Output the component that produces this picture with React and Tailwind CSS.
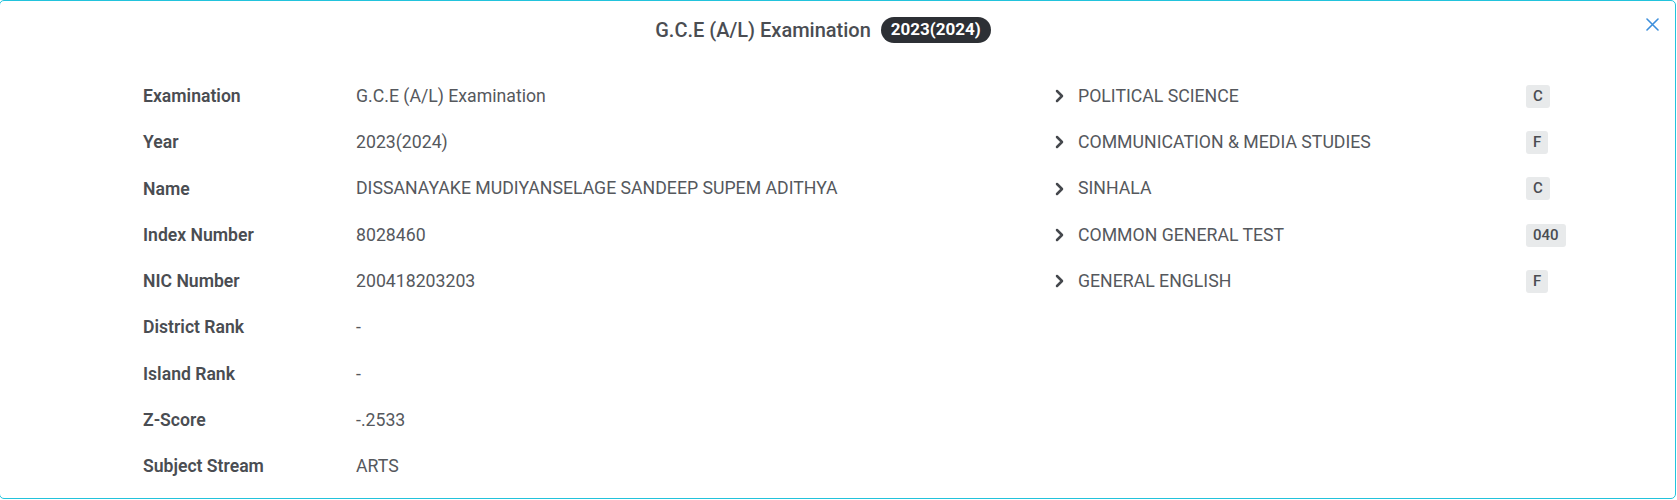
const DETAILS = [
  { label: 'Examination', value: 'G.C.E (A/L) Examination' },
  { label: 'Year', value: '2023(2024)' },
  { label: 'Name', value: 'DISSANAYAKE MUDIYANSELAGE SANDEEP SUPEM ADITHYA' },
  { label: 'Index Number', value: '8028460' },
  { label: 'NIC Number', value: '200418203203' },
  { label: 'District Rank', value: '-' },
  { label: 'Island Rank', value: '-' },
  { label: 'Z-Score', value: '-.2533' },
  { label: 'Subject Stream', value: 'ARTS' },
];

const SUBJECTS = [
  { name: 'POLITICAL SCIENCE', grade: 'C' },
  { name: 'COMMUNICATION & MEDIA STUDIES', grade: 'F' },
  { name: 'SINHALA', grade: 'C' },
  { name: 'COMMON GENERAL TEST', grade: '040' },
  { name: 'GENERAL ENGLISH', grade: 'F' },
];

function Chevron() {
  return (
    <svg width="10" height="14" viewBox="0 0 10 14" className="shrink-0">
      <polyline points="2,2 7,7 2,12" fill="none" stroke="#45484d" strokeWidth="2.5" strokeLinecap="round" strokeLinejoin="round" />
    </svg>
  );
}

function CloseIcon() {
  return (
    <svg width="13" height="13" viewBox="0 0 13 13">
      <path d="M1 1 12 12M12 1 1 12" stroke="#3d8fdc" strokeWidth="1.6" strokeLinecap="round" />
    </svg>
  );
}

export default function App() {
  return (
    <div className="w-[1677px] h-[500px] bg-white overflow-hidden font-['Roboto',sans-serif]">
      <div className="-ml-px w-[1677px] h-[499px] border border-[#22c3dc] rounded-[5px] flex flex-col">
        {/* Header */}
        <div className="h-[57px] shrink-0 flex pr-[16px]">
          <div className="flex-1 flex items-center justify-center gap-[10px]">
            <span className="text-[20px] font-medium text-[#4a4d52]">G.C.E (A/L) Examination</span>
            <span className="h-[26px] px-[10px] rounded-full bg-[#2d3035] text-white text-[17px] font-bold flex items-center">
              2023(2024)
            </span>
          </div>
          <button className="mt-[17px] w-[13px] h-[13px] flex items-center justify-center">
            <CloseIcon />
          </button>
        </div>

        {/* Body */}
        <div className="flex pt-[15px] pl-[143px]">
          <div className="w-[912px]">
            {DETAILS.map(({ label, value }) => (
              <div key={label} className="h-[46.3px] flex items-center text-[17.7px]">
                <span className="w-[213px] font-semibold text-[#4a4d52] text-[17.6px]">{label}</span>
                <span className="text-[#55585d]">{value}</span>
              </div>
            ))}
          </div>
          <div className="flex-1">
            {SUBJECTS.map(({ name, grade }) => (
              <div key={name} className="h-[46.3px] flex items-center text-[17.7px]">
                <Chevron />
                <span className="ml-[13px] w-[448px] text-[#55585d]">{name}</span>
                <span className="h-[23px] px-[7px] rounded-[3px] bg-[#e8eaeb] text-[15px] font-medium text-[#4a4d52] flex items-center">
                  {grade}
                </span>
              </div>
            ))}
          </div>
        </div>
      </div>
    </div>
  );
}
